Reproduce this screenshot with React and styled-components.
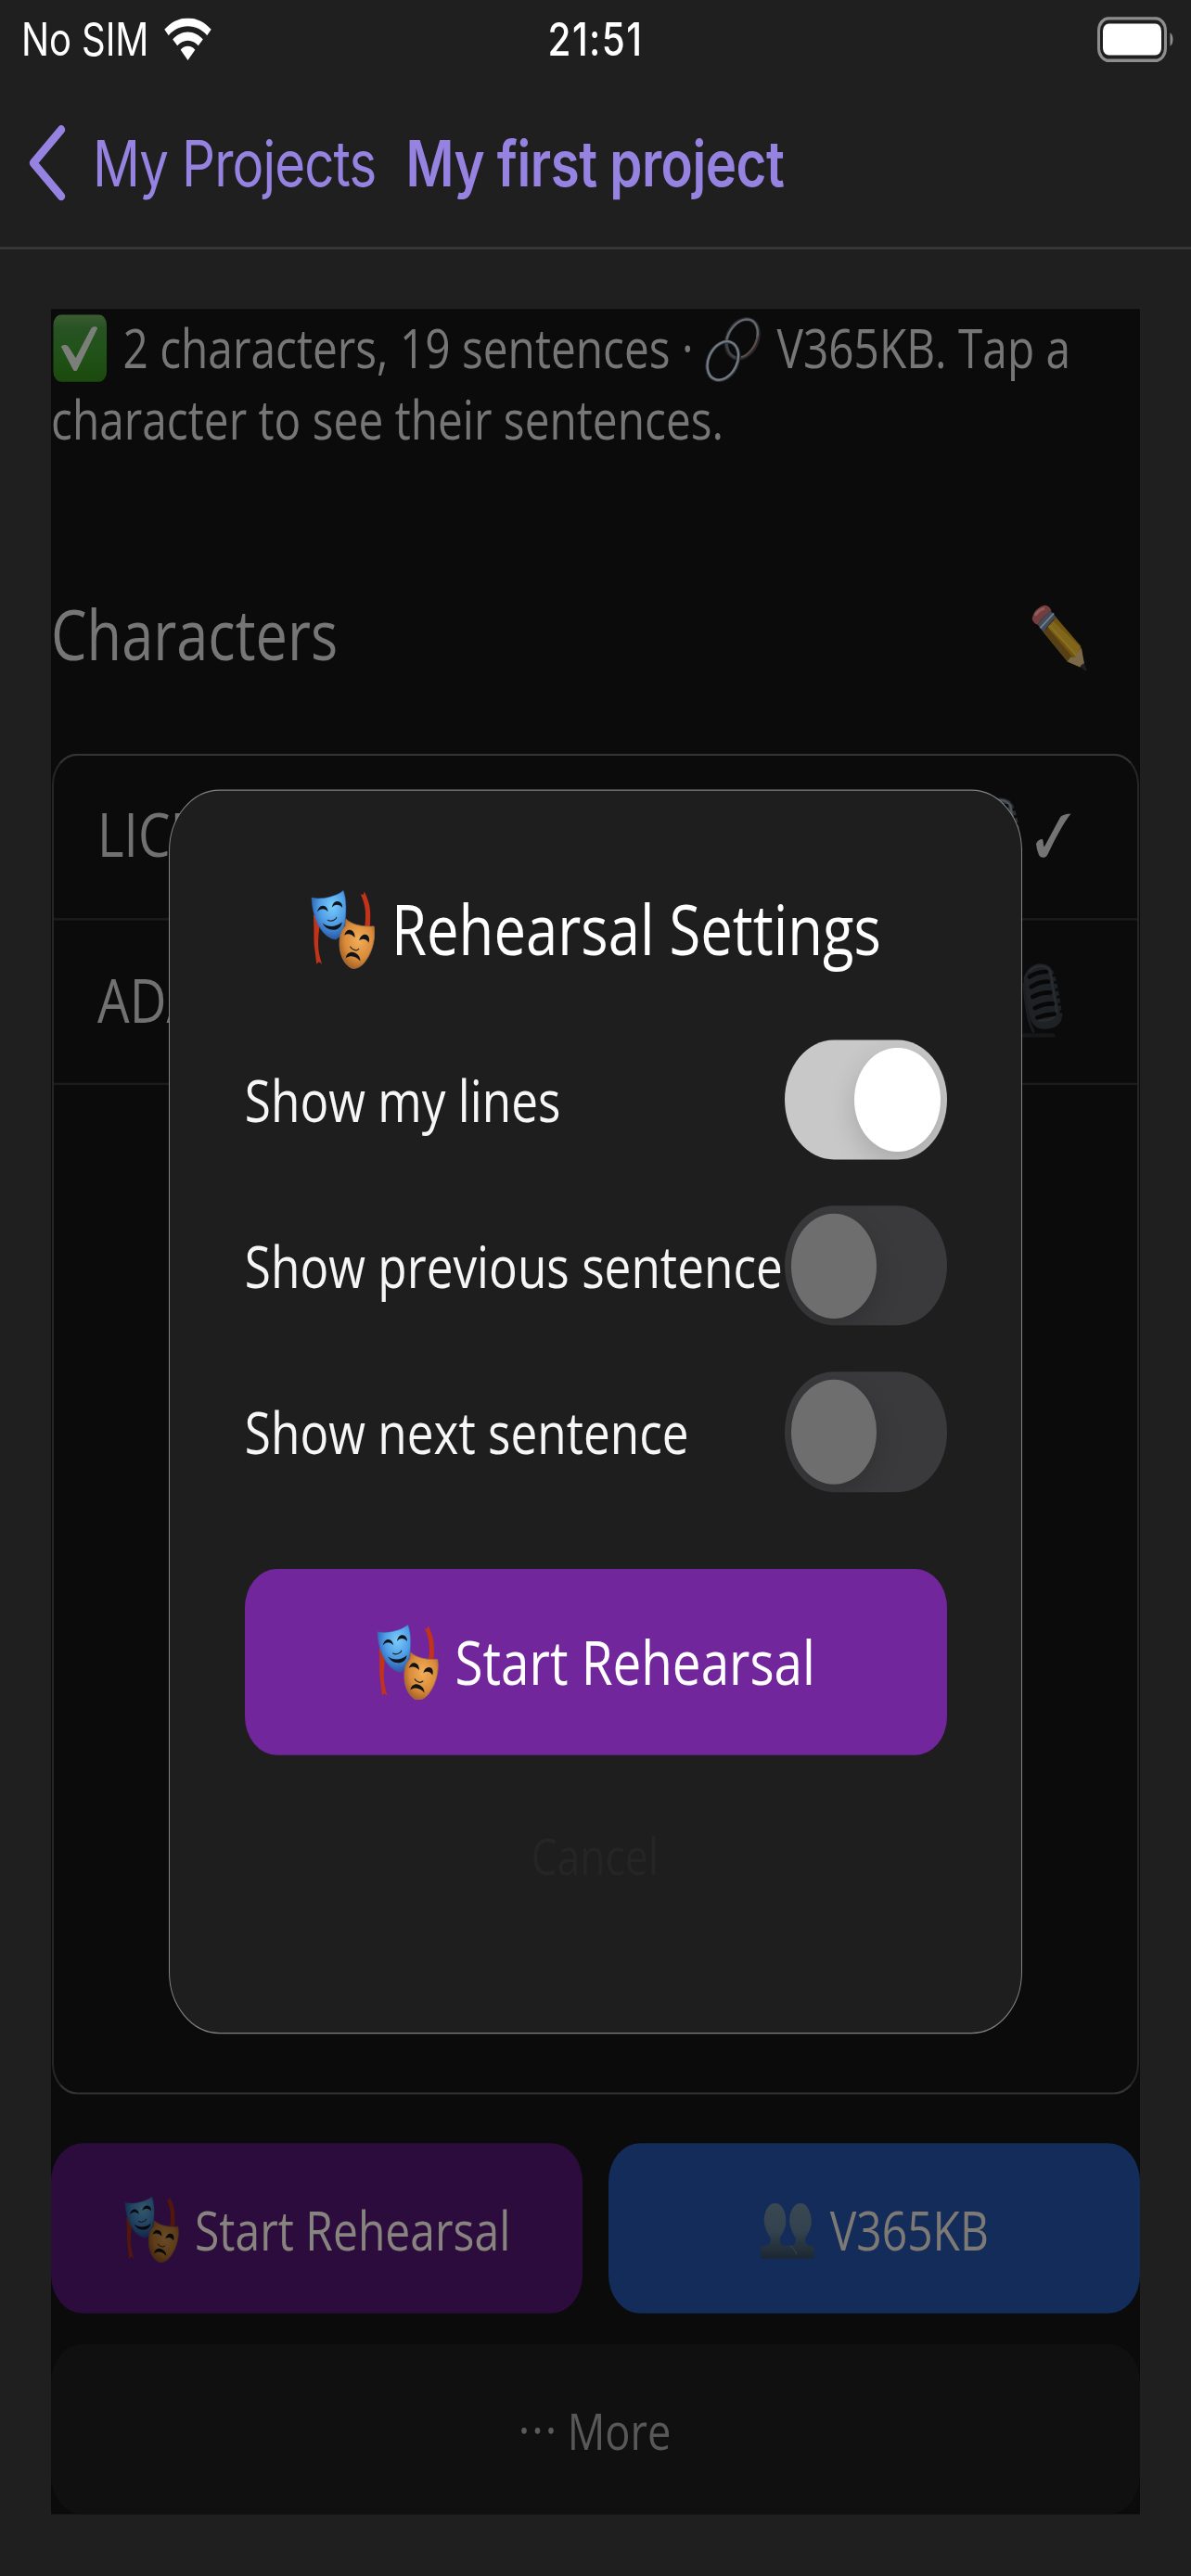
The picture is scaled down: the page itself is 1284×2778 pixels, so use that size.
import React from "react";
import styled, { createGlobalStyle } from "styled-components";

const GlobalStyle = createGlobalStyle`
  *, *::before, *::after { box-sizing: border-box; }
  html, body { margin: 0; padding: 0; background: #1f1f1f; }
  body { height: 2778px; overflow: hidden; }
`;

/* The canvas is laid out at 1284 x 2283.8 and stretched to the tall display. */
const Screen = styled.div`
  position: relative;
  width: 1284px;
  height: 2283.8px;
  display: flex;
  flex-direction: column;
  background: #1f1f1f;
  transform: scaleY(1.21639);
  transform-origin: 0 0;
  font-family: "Open Sans", "Noto Sans", sans-serif;
  white-space: nowrap;
`;

const Text = styled.span`
  font-size: ${(p) => p.$size}px;
  letter-spacing: ${(p) => p.$track || 0}px;
  color: ${(p) => p.$color || "inherit"};
  line-height: 1.362;
`;

const StatusBar = styled.header`
  display: grid;
  grid-template-columns: 1fr auto 1fr;
  align-items: center;
  height: 68.5px;
  padding: 0.8px 18px 0;
  color: #fff;
  font-family: Inter, sans-serif;
`;

const Carrier = styled.div`
  display: flex;
  align-items: center;
  gap: 17px;
  padding-left: 5px;
  font-size: 40px;
  letter-spacing: -0.1px;
`;

const Clock = styled.div`
  font-size: 40.5px;
  font-weight: 500;
  letter-spacing: 1.4px;
`;

const BatterySlot = styled.div`
  display: flex;
  justify-content: flex-end;
`;

const NavBar = styled.nav`
  display: flex;
  align-items: center;
  height: 152.4px;
  padding: 1.4px 31px 0;
  border-bottom: 2.4px solid #3c3c3c;
  color: #9682e0;
  font-family: Inter, sans-serif;
`;

const BackLabel = styled.span`
  margin-left: 27px;
  font-size: 56.4px;
  letter-spacing: ${(p) => p.$track}px;
`;

const NavTitle = styled.h1`
  margin: 0 0 0 32px;
  font-size: 56.4px;
  font-weight: 600;
  letter-spacing: ${(p) => p.$track}px;
`;

const Panel = styled.main`
  display: flex;
  flex-direction: column;
  margin: 53.1px 55px 0;
  height: 1955px;
  background: #0b0b0b;
`;

const Summary = styled.p`
  margin: 0;
  height: 181.6px;
  padding: 2px 0 0 0;
  font-size: 47.8px;
  line-height: 64.5px;
  color: #767676;
  svg { vertical-align: -13px; }
`;

const SectionHeader = styled.div`
  display: flex;
  align-items: center;
  justify-content: space-between;
  height: 212.6px;
  padding: 0 56px 0 0;
  color: #767676;
`;

const EditIcon = styled.span`
  display: flex;
  padding-top: 9px;
`;

const CharacterList = styled.ul`
  margin: 0 1px;
  padding: 0;
  list-style: none;
  height: 1188.9px;
  border: 2px solid #333;
  border-left-color: #262626;
  border-right-color: #262626;
  border-radius: 27.4px;
`;

const CharacterRow = styled.li`
  display: flex;
  align-items: center;
  justify-content: space-between;
  height: ${(p) => p.$height}px;
  padding: 0 ${(p) => p.$right}px ${(p) => p.$bottom}px 47px;
  border-bottom: 2px solid #1c1c1c;
  color: #717171;
`;

const RowIcons = styled.div`
  display: flex;
  align-items: center;
  gap: 14px;
`;

const ActionRow = styled.div`
  display: grid;
  grid-template-columns: 1fr 1fr;
  gap: 27.4px;
  margin-top: 43.2px;
`;

const Button = styled.button`
  display: flex;
  align-items: center;
  justify-content: center;
  gap: ${(p) => p.$gap || 17}px;
  width: 100%;
  height: ${(p) => p.$height || 150.7}px;
  padding: ${(p) => p.$drop ?? 2}px 0 0 1px;
  border: 0;
  border-radius: 34.2px;
  background: ${(p) => p.$bg};
  color: ${(p) => p.$color};
  font-family: inherit;
`;

const MoreButton = styled(Button)`
  margin-top: 27.4px;
`;

const Modal = styled.section`
  position: absolute;
  left: 182px;
  top: 699.9px;
  width: 920.4px;
  height: 1102.7px;
  display: flex;
  flex-direction: column;
  padding: 81px 80.8px 0;
  border: 1.8px solid #828282;
  border-radius: 54.8px;
  background: #1e1e1e;
`;

const ModalTitle = styled.h2`
  display: flex;
  align-items: center;
  justify-content: center;
  gap: 18px;
  margin: 0 0 56.2px;
  height: 84px;
  padding-top: 1px;
  font-weight: 400;
  color: #fff;
`;

const Settings = styled.div`
  display: flex;
  flex-direction: column;
  gap: 41px;
  margin-bottom: 68.8px;
`;

const Setting = styled.label`
  display: flex;
  align-items: center;
  justify-content: space-between;
  height: 106.2px;
  color: #f6f6f6;
`;

const SettingName = styled(Text)`
  padding-top: 1.4px;
`;

const Track = styled.span`
  display: flex;
  flex: none;
  align-items: center;
  justify-content: ${(p) => (p.$on ? "flex-end" : "flex-start")};
  width: 174.7px;
  height: 106.2px;
  padding: 6.8px;
  border-radius: 53.1px;
  background: ${(p) => (p.$on ? "#c8c8c8" : "#3a3a3c")};
  overflow: hidden;
`;

const Thumb = styled.span`
  width: 92.5px;
  height: 92.5px;
  border-radius: 50%;
  background: ${(p) => (p.$on ? "#fff" : "#6e6e6e")};
  box-shadow: 0 9px 26px rgba(0, 0, 0, 0.16);
`;

const CancelButton = styled(Button)`
  margin-top: 6.6px;
  padding-right: 3px;
`;

const Wifi = () => (
  <svg width="51" height="38" viewBox="0 0 51 38">
    <g fill="#fff">
      <path d="M25.5 0C15.700 0 6.800 3.900 0.300 10.200L4.800 15.400C10.200 10.200 17.500 7.300 25.500 7.300S40.800 10.200 46.200 15.400L50.700 10.200C44.200 3.900 35.300 0 25.500 0Z" />
      <path d="M25.500 12.300C19.200 12.300 13.400 14.800 9.200 18.900L14.200 24.500C17.100 21.700 21 20 25.500 20S33.900 21.700 36.800 24.500L41.800 18.900C37.600 14.800 31.800 12.300 25.500 12.300Z" />
      <path d="M25.500 25C22.400 25 19.700 26.200 17.700 28.100L25.500 37.500L33.300 28.100C31.300 26.200 28.600 25 25.500 25Z" />
    </g>
  </svg>
);

const Battery = () => (
  <svg width="83" height="40" viewBox="0 0 83 40">
    <rect x="1.500" y="1.200" width="72" height="37.600" rx="11" fill="none" stroke="#8e8e8e" strokeWidth="3" />
    <rect x="6" y="6" width="63" height="28" rx="6.500" fill="#fff" />
    <path d="M78.500 14C82.500 16 82.500 24 78.500 26Z" fill="#8e8e8e" />
  </svg>
);

const Chevron = () => (
  <svg width="42" height="67" viewBox="0 0 42 67">
    <path d="M35 4L5 33.500L35 63" fill="none" stroke="#9682e0" strokeWidth="8" strokeLinecap="round" strokeLinejoin="round" />
  </svg>
);

const MasksSvg = styled.svg`
  flex: none;
  filter: ${(p) => (p.$dim ? "brightness(0.43)" : "none")};
`;

const Masks = ({ width, height, dim, id }) => (
  <MasksSvg $dim={dim} width={width} height={height} viewBox="46 65 208 254" preserveAspectRatio="none">
    <defs>
      <radialGradient id={`${id}b`} cx="0.6" cy="0.32" r="0.75">
        <stop offset="0" stopColor="#79cdfb" />
        <stop offset="0.5" stopColor="#4f9de6" />
        <stop offset="1" stopColor="#214a9b" />
      </radialGradient>
      <radialGradient id={`${id}o`} cx="0.55" cy="0.42" r="0.72">
        <stop offset="0" stopColor="#f3ae58" />
        <stop offset="0.55" stopColor="#d98b3a" />
        <stop offset="1" stopColor="#8d4b1b" />
      </radialGradient>
    </defs>
    <g fill="#c2331a">
      <path d="M54 144C58 180 55 210 57 240C60 265 62 280 65 304L72 296L82 304C74 278 70 260 70 235C70 205 76 185 74 165Z" />
      <path d="M207 79L215 81L219 70C228 90 238 110 238 140C238 160 239 175 235 188L220 184C225 150 225 115 207 79Z" />
    </g>
    <path d="M49 90C75 97 125 88 151 67C158 85 161 110 159 145C157 185 147 214 127 224C90 222 52 170 49 90Z" fill={`url(#${id}b)`} stroke="#326eb8" strokeWidth="1.500" />
    <path d="M160 159C180 178 215 184 250 182C256 215 247 262 222 295C208 314 187 323 173 314C150 300 137 266 139 230C140 202 150 190 157 181Z" fill={`url(#${id}o)`} stroke="#a2714a" strokeWidth="2.500" />
    <g fill="#101418">
      <path d="M67 136C70 119 83 110 94 119C99 123 102 130 101 135C94 125 78 121 67 136Z" />
      <path d="M114 122C117 104 130 96 142 105C147 110 149 117 148 122C139 111 124 108 114 122Z" />
      <path d="M84 172C99 185 126 187 147 169C146 181 138 190 126 193C107 196 91 187 84 172Z" />
      <path d="M154 211C160 193 171 189 183 199C187 204 189 212 188 218C179 208 167 203 154 211Z" />
      <path d="M202 228C207 210 220 204 230 212C235 217 236 227 233 235C227 224 215 219 202 228Z" />
      <path d="M159 284C162 267 177 261 190 268C200 273 206 282 206 294C195 280 177 272 159 284Z" />
    </g>
    <g fill="none" stroke="#202021" strokeWidth="3.500" strokeLinecap="round">
      <path d="M101 162Q112 168 122 161Q129 158 129 153" />
      <path d="M174 248Q177 255 185 257Q193 262 201 255" />
    </g>
  </MasksSvg>
);

const BadgeSvg = styled.svg`
  margin: 0 4px 0 2px;
`;

const CheckBadge = () => (
  <BadgeSvg width="59" height="59.500" viewBox="0 0 60 59" preserveAspectRatio="none">
    <defs>
      <linearGradient id="badge" x1="0" y1="0" x2="0" y2="1">
        <stop offset="0" stopColor="#3b5c32" />
        <stop offset="0.200" stopColor="#285223" />
        <stop offset="0.500" stopColor="#21531a" />
        <stop offset="1" stopColor="#1c4a0d" />
      </linearGradient>
    </defs>
    <rect x="0.500" y="0" width="58.500" height="59" rx="9" fill="url(#badge)" />
    <path d="M9 28C11 26 15 26 17 28L25 38L42 12C44 10 48 10 49 12L27 48C26 50 23 50 22 48Z" fill="#7c7f79" />
  </BadgeSvg>
);

const LinkSvg = styled.svg`
  margin-right: 5px;
`;

const Link = () => (
  <LinkSvg width="60" height="58" viewBox="67 58 180 214" preserveAspectRatio="none">
    <g fill="none">
      <ellipse cx="188" cy="129" rx="48" ry="67" transform="rotate(25 188 129)" stroke="#2c2728" strokeWidth="13" />
      <path d="M136 139C142 100 172 67 203 66C229 66 242 92 236 125" stroke="#606972" strokeWidth="7" />
      <path d="M237 120C232 156 204 186 184 190" stroke="#5c4e4b" strokeWidth="6" />
      <path d="M136 139C137 164 149 184 165 192" stroke="#3d444c" strokeWidth="8" />
      <ellipse cx="125" cy="202" rx="47" ry="66" transform="rotate(25 125 202)" stroke="#2b3036" strokeWidth="12" />
      <ellipse cx="125" cy="201" rx="46" ry="66" transform="rotate(25 125 201)" stroke="#727a84" strokeWidth="7" />
    </g>
  </LinkSvg>
);

const Pencil = () => (
  <svg width="61" height="60" viewBox="68 38 182 218" preserveAspectRatio="none">
    <path d="M107 128L147 79L226 171L239 235L224 240L184 222Z" fill="#715510" />
    <path d="M120 110L137 91L224 174L215 202Z" fill="#80661a" />
    <path d="M107 128L120 112L202 209L184 222Z" fill="#574015" />
    <path d="M126 105L213 203" stroke="#8a7020" strokeWidth="6" />
    <path d="M184 222L194 207L208 209L214 195L229 178L239 236L224 239Z" fill="#7b6847" />
    <path d="M225 236L236 227L248 251C240 252 232 246 225 236Z" fill="#1e1f24" />
    <path d="M88 103Q111 69 130 58L148 79Q128 94 107 128Z" fill="#424c59" />
    <path d="M96 114L140 66" stroke="#77808a" strokeWidth="5" />
    <path d="M70 84C74 59 91 45 110 40C122 40 128 48 132 57Q107 74 88 103Q75 99 70 84Z" fill="#723e40" />
    <path d="M80 73Q91 55 110 51" stroke="#925a5a" strokeWidth="9" fill="none" />
  </svg>
);

const Mic = ({ bright }) => (
  <svg width="59" height="69" viewBox="82 595 177 252" preserveAspectRatio="none">
    {!bright && <path d="M130 829H225Q242 832 230 842H110Q100 838 130 829Z" fill="#151718" />}
    <path d="M132 648C148 606 185 592 217 614C236 630 247 700 257 768C258 797 235 815 204 815C170 817 155 799 148 762L134 696Z" fill={bright ? "#2c3135" : "#1f2225"} />
    <path d="M148 630C175 605 202 606 218 629L238 755C237 784 210 791 177 787" fill="none" stroke={bright ? "#4d555b" : "#282b2f"} strokeWidth="7" />
    <g stroke="#080808" strokeWidth="14" strokeLinecap="round" fill="none">
      <path d="M151 646Q174 630 205 630" />
      <path d="M156 679Q181 661 211 662" />
      <path d="M161 711Q188 696 218 697" />
      <path d="M168 747Q197 732 226 733" />
      <path d="M176 778Q203 768 231 767" />
    </g>
    <path d="M224 613L257 780" stroke="#0a0a0a" strokeWidth="9" strokeDasharray="9 15" />
    <path d="M132 665C137 740 145 793 165 827" fill="none" stroke="#1b1e20" strokeWidth="8" />
  </svg>
);

const Tick = () => (
  <svg width="38" height="40" viewBox="173 107 116 148" preserveAspectRatio="none" overflow="visible">
    <path d="M173 211C177 201 185 196 193 195C199 202 195 214 200 221L253 123C260 115 274 113 288 112C267 136 239 187 211 246C204 260 187 259 182 247Q175 232 173 211Z" fill="#747474" />
  </svg>
);

const People = () => (
  <svg width="58" height="49.300" viewBox="64 65 174 179" preserveAspectRatio="none" overflow="visible">
    <defs>
      <linearGradient id="people" x1="0" y1="0" x2="0" y2="1">
        <stop offset="0" stopColor="#3a4854" />
        <stop offset="0.500" stopColor="#33424e" />
        <stop offset="1" stopColor="#1b2733" />
      </linearGradient>
    </defs>
    <path d="M64 248V214Q68 206 84 206C96 202 97 192 96 180C86 168 81 156 77 139C71 111 84 70 111 70S149 110 145 139C141 156 135 168 127 180C126 192 127 201 137 206H166C178 202 178 192 177 180C169 168 163 156 159 139C153 110 167 70 193 70S231 112 228 139C224 156 217 168 209 180C208 193 208 202 220 206C233 206 237 208 237 214V248Z" fill="url(#people)" />
    <path d="M160 207Q171 213 181 235" stroke="#35434e" strokeWidth="3" fill="none" />
  </svg>
);

const Dots = () => (
  <svg width="35" height="8" viewBox="0 0 35 8" fill="#5b5b5b">
    <circle cx="3" cy="4" r="2.800" />
    <circle cx="17.500" cy="4" r="2.800" />
    <circle cx="32" cy="4" r="2.800" />
  </svg>
);

const Toggle = ({ on }) => (
  <Track $on={on} role="switch" aria-checked={on}>
    <Thumb $on={on} />
  </Track>
);

const SETTINGS = [
  { label: "Show my lines", on: true },
  { label: "Show previous sentence", on: false },
  { label: "Show next sentence", on: false },
];

export default function App() {
  return (
    <>
      <GlobalStyle />
      <Screen>
        <StatusBar>
          <Carrier>No SIM<Wifi /></Carrier>
          <Clock>21:51</Clock>
          <BatterySlot><Battery /></BatterySlot>
        </StatusBar>
        <NavBar>
          <Chevron />
          <BackLabel $track={-0.9}>My Projects</BackLabel>
          <NavTitle $track={-0.5}>My first project</NavTitle>
        </NavBar>
        <Panel>
          <Summary>
            <CheckBadge /> 2 characters, 19 sentences · <Link /> V365KB. Tap a
            <br />
            character to see their sentences.
          </Summary>
          <SectionHeader>
            <Text $size={61.3}>Characters</Text>
            <EditIcon><Pencil /></EditIcon>
          </SectionHeader>
          <CharacterList>
            <CharacterRow $height={145.4} $right={71} $bottom={4.5}>
              <Text $size={54.8}>LICE</Text>
              <RowIcons><Mic bright /><Tick /></RowIcons>
            </CharacterRow>
            <CharacterRow $height={146.7} $right={80} $bottom={2.5}>
              <Text $size={54.8}>ADA</Text>
              <RowIcons><Mic /></RowIcons>
            </CharacterRow>
          </CharacterList>
          <ActionRow>
            <Button $bg="#2c0c3c" $color="#87847f">
              <Masks id="m1" width={59} height={59} dim />
              <Text $size={48}>Start Rehearsal</Text>
            </Button>
            <Button $bg="#142c59" $color="#7d7a75">
              <People />
              <Text $size={48}>V365KB</Text>
            </Button>
          </ActionRow>
          <MoreButton $bg="#101010" $color="#585858" $gap={15}>
            <Dots />
            <Text $size={45.2}>More</Text>
          </MoreButton>
        </Panel>
        <Modal>
          <ModalTitle>
            <Masks id="m2" width={69.5} height={70} />
            <Text $size={61.6}>Rehearsal Settings</Text>
          </ModalTitle>
          <Settings>
            {SETTINGS.map((s) => (
              <Setting key={s.label}>
                <SettingName $size={51.3}>{s.label}</SettingName>
                <Toggle on={s.on} />
              </Setting>
            ))}
          </Settings>
          <Button $bg="#72269b" $color="#fff" $height={164.4} $drop={0}>
            <Masks id="m3" width={67} height={67.5} />
            <Text $size={54.8}>Start Rehearsal</Text>
          </Button>
          <CancelButton $bg="transparent" $color="#252525" $height={164.4}>
            <Text $size={44.5}>Cancel</Text>
          </CancelButton>
        </Modal>
      </Screen>
    </>
  );
}
